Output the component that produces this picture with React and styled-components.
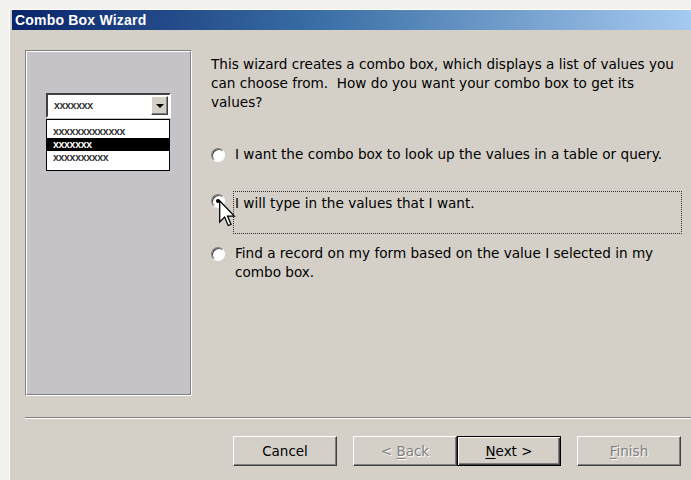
import React from "react";
import styled, { createGlobalStyle, css } from "styled-components";

const face = "#d4d0c8";
const shadow = "#808080";
const darkShadow = "#404040";
const font = `"DejaVu Sans", Tahoma, Verdana, sans-serif`;
const titleFont = `"Liberation Sans", Tahoma, Arial, sans-serif`;

const GlobalStyle = createGlobalStyle`
  html, body {
    margin: 0;
    padding: 0;
    background: #f2f1ee;
    font-family: ${font};
  }
`;

const Frame = styled.div`
  position: relative;
  margin: 9px 0 0 9px;
  height: 471px;
  box-sizing: border-box;
  background: ${face};
  border-left: 1px solid #ffffff;
  border-top: 1px solid #ffffff;
  padding-left: 2px;
  overflow: hidden;
`;

const TitleBar = styled.div`
  height: 20px;
  display: flex;
  align-items: center;
  padding-left: 3px;
  background: linear-gradient(to right, #0a246a 0%, #3a6ea5 45%, #a6caf0 100%);
  color: #ffffff;
  font-family: ${titleFont};
  font-weight: bold;
  font-size: 14px;
  letter-spacing: 0.2px;
`;

const Body = styled.div`
  display: flex;
  padding: 20px 0 0 13px;
  height: 346px;
`;

const Picture = styled.div`
  width: 167px;
  height: 346px;
  box-sizing: border-box;
  border: 1px solid;
  border-color: ${shadow} #ffffff #ffffff ${shadow};
  flex-shrink: 0;
`;

const PictureInner = styled.div`
  height: 100%;
  box-sizing: border-box;
  border: 1px solid;
  border-color: #ffffff ${shadow} ${shadow} #ffffff;
  background: #c5c3c8;
  padding: 41px 0 0 19px;
`;

const Combo = styled.div`
  width: 125px;
  height: 25px;
  box-sizing: border-box;
  border: 2px solid;
  border-color: ${darkShadow} #ffffff #ffffff ${darkShadow};
  background: #ffffff;
  display: flex;
  align-items: center;
  justify-content: space-between;
  padding: 0 1px 0 6px;
`;

const Dummy = styled.span`
  font-family: "Liberation Sans", Arial, sans-serif;
  font-size: 10.5px;
  font-weight: bold;
  letter-spacing: -0.3px;
  color: ${(p) => (p.$inverse ? "#ffffff" : "#333333")};
  line-height: 1;
`;

const DropButton = styled.div`
  width: 17px;
  height: 19px;
  box-sizing: border-box;
  background: ${face};
  border: 1px solid;
  border-color: #ffffff ${darkShadow} ${darkShadow} #ffffff;
  box-shadow: inset -1px -1px 0 ${shadow};
  display: flex;
  align-items: center;
  justify-content: center;
`;

const Arrow = styled.div`
  width: 0;
  height: 0;
  border-left: 4px solid transparent;
  border-right: 4px solid transparent;
  border-top: 4px solid #000000;
`;

const List = styled.div`
  width: 124px;
  margin-top: 1px;
  box-sizing: border-box;
  border: 1px solid #000000;
  background: #ffffff;
  padding: 5px 0 6px;
`;

const ListRow = styled.div`
  height: 13px;
  display: flex;
  align-items: center;
  padding-left: 6px;
  background: ${(p) => (p.$selected ? "#000000" : "transparent")};
`;

const Content = styled.div`
  flex: 1;
  padding: 5px 0 0 19px;
  font-size: 13.6px;
  color: #000000;
  line-height: 19px;
`;

const Intro = styled.p`
  margin: 0 0 33px;
  white-space: nowrap;
`;

const Option = styled.div`
  position: relative;
  display: flex;
  align-items: flex-start;
  margin-bottom: ${(p) => p.$gap}px;
`;

const Radio = styled.span`
  position: relative;
  width: 14px;
  height: 14px;
  margin-top: ${(p) => p.$offset}px;
  box-sizing: border-box;
  border-radius: 50%;
  flex-shrink: 0;
  background: #ffffff;
  border: 1px solid;
  border-color: ${shadow} #ffffff #ffffff ${shadow};
  box-shadow: inset 1px 1px 0 ${darkShadow};

  ${(p) =>
    p.$checked &&
    css`
      &::after {
        content: "";
        position: absolute;
        left: 4px;
        top: 4px;
        width: 4px;
        height: 4px;
        border-radius: 50%;
        background: #000000;
      }
    `}
`;

const Label = styled.div`
  margin-left: 8px;
  width: 449px;
  box-sizing: border-box;
  white-space: nowrap;
  padding: ${(p) => (p.$focused ? "2px 0 0 1px" : "0 0 0 2px")};
  height: ${(p) => (p.$focused ? "43px" : "auto")};
  border: ${(p) => (p.$focused ? "1px dotted #333" : "none")};
`;

const Cursor = styled.svg`
  position: absolute;
  left: 8px;
  top: 9px;
  pointer-events: none;
`;

const Separator = styled.div`
  margin: 21px 0 0 13px;
  height: 1px;
  background: ${shadow};
  border-bottom: 1px solid #ffffff;
`;

const Buttons = styled.div`
  display: flex;
  padding: 17px 0 0 221px;
`;

const Button = styled.button`
  width: 104px;
  height: 30px;
  margin-right: ${(p) => p.$gap || 0}px;
  box-sizing: border-box;
  background: ${face};
  font-family: ${font};
  font-size: 13.5px;
  padding: 0;
  color: ${(p) => (p.disabled ? shadow : "#000000")};
  text-shadow: ${(p) => (p.disabled ? "1px 1px 0 #ffffff" : "none")};
  border: 1px solid;
  border-color: #ffffff ${darkShadow} ${darkShadow} #ffffff;
  box-shadow: inset -1px -1px 0 ${shadow};

  ${(p) =>
    p.$default &&
    css`
      border-color: #000000;
      box-shadow: inset 1px 1px 0 #ffffff, inset -1px -1px 0 ${darkShadow},
        inset -2px -2px 0 ${shadow};
    `}

  u {
    text-decoration-thickness: 1px;
    text-underline-offset: 2px;
  }
`;

export default function App() {
  return (
    <>
      <GlobalStyle />
      <Frame>
        <TitleBar>Combo Box Wizard</TitleBar>
        <Body>
          <Picture>
            <PictureInner>
              <Combo>
                <Dummy>xxxxxxx</Dummy>
                <DropButton>
                  <Arrow />
                </DropButton>
              </Combo>
              <List>
                <ListRow>
                  <Dummy>xxxxxxxxxxxxx</Dummy>
                </ListRow>
                <ListRow $selected>
                  <Dummy $inverse>xxxxxxx</Dummy>
                </ListRow>
                <ListRow>
                  <Dummy>xxxxxxxxxx</Dummy>
                </ListRow>
              </List>
            </PictureInner>
          </Picture>
          <Content>
            <Intro>
              This wizard creates a combo box, which displays a list of values you
              <br />
              can choose from.&nbsp; How do you want your combo box to get its
              <br />
              values?
            </Intro>
            <Option $gap={27}>
              <Radio $offset={3} />
              <Label>I want the combo box to look up the values in a table or query.</Label>
            </Option>
            <Option $gap={10}>
              <Radio $offset={3} $checked />
              <Label $focused>I will type in the values that I want.</Label>
              <Cursor width="17" height="27" viewBox="0 0 12 19">
                <path
                  d="M0.5 0.5 L0.5 15.5 L4 12 L6.5 18 L8.5 17.2 L6 11.3 L10.8 11.3 Z"
                  fill="#ffffff"
                  stroke="#000000"
                  strokeWidth="0.9"
                  strokeLinejoin="miter"
                />
              </Cursor>
            </Option>
            <Option $gap={0}>
              <Radio $offset={3} />
              <Label>
                Find a record on my form based on the value I selected in my
                <br />
                combo box.
              </Label>
            </Option>
          </Content>
        </Body>
        <Separator />
        <Buttons>
          <Button $gap={16}>Cancel</Button>
          <Button disabled>
            &lt; <u>B</u>ack
          </Button>
          <Button $default $gap={16}>
            <u>N</u>ext &gt;
          </Button>
          <Button disabled>
            <u>F</u>inish
          </Button>
        </Buttons>
      </Frame>
    </>
  );
}
